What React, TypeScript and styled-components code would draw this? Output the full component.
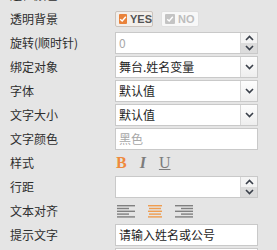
import React from "react";
import styled, { createGlobalStyle } from "styled-components";

const GlobalStyle = createGlobalStyle`
  html, body {
    margin: 0;
    padding: 0;
    background: #e5e5e5;
    overflow: hidden;
  }
  body {
    font-family: "Noto Sans CJK SC", "Noto Sans", sans-serif;
  }
`;

const Panel = styled.div`
  margin-top: -16px;
  width: 277px;
  display: flex;
  flex-direction: column;
  gap: 2px;
`;

const Row = styled.div`
  display: grid;
  grid-template-columns: 115px 143px;
  height: 22px;
  align-items: center;
`;

const Label = styled.div`
  padding-left: 10px;
  font-size: 12px;
  line-height: 22px;
  color: #2e2e2e;
  white-space: nowrap;
`;

const Field = styled.div`
  position: relative;
  height: 22px;
  box-sizing: border-box;
  border: 1px solid #c9c9c9;
  background: #fff;
  display: flex;
  align-items: center;
`;

const FieldText = styled.div<{ muted?: boolean }>`
  flex: 1;
  padding-left: 3px;
  font-size: 12px;
  line-height: 20px;
  color: ${(p) => (p.muted ? "#a8a8a8" : "#1e1e1e")};
  white-space: nowrap;
  overflow: hidden;
`;

const SideButton = styled.div`
  width: 16px;
  height: 20px;
  border-left: 1px solid #d6d6d6;
  background: linear-gradient(#fdfdfd, #eeeeee);
  display: flex;
  align-items: center;
  justify-content: center;
`;

const SpinBox = styled.div`
  width: 16px;
  height: 20px;
  border-left: 1px solid #d6d6d6;
  display: flex;
  flex-direction: column;
`;

const SpinHalf = styled.div<{ down?: boolean }>`
  flex: 1;
  display: flex;
  align-items: center;
  justify-content: center;
  background: ${(p) => (p.down ? "#dcdcdc" : "#f4f4f4")};
`;

const Toggles = styled.div`
  display: flex;
  gap: 8px;
  align-items: center;
`;

const Toggle = styled.div<{ active?: boolean }>`
  width: 38px;
  height: 16px;
  box-sizing: border-box;
  border: 1px solid ${(p) => (p.active ? "#cbc3bd" : "#e0e0e0")};
  border-radius: 2px;
  background: ${(p) => (p.active ? "#f3efeb" : "#f8f8f8")};
  display: flex;
  align-items: center;
  gap: 3px;
  padding-left: 3px;
  font-family: "Liberation Sans", Arial, sans-serif;
  font-size: 11px;
  font-weight: bold;
  color: ${(p) => (p.active ? "#555" : "#bdbdbd")};
`;

const CheckMark = styled.div<{ active?: boolean }>`
  width: 10px;
  height: 10px;
  border-radius: 1px;
  background: ${(p) => (p.active ? "#e9823a" : "#c4c4c4")};
  display: flex;
  align-items: center;
  justify-content: center;
`;

const StyleButtons = styled.div`
  display: flex;
  align-items: center;
  gap: 13px;
  padding-left: 1px;
  font-family: "Liberation Serif", "Times New Roman", serif;
  font-size: 16px;
  font-weight: bold;
  line-height: 22px;
`;

const StyleGlyph = styled.span<{ on?: boolean; italic?: boolean; under?: boolean }>`
  color: ${(p) => (p.on ? "#ef8a3e" : "#7c7c7c")};
  font-style: ${(p) => (p.italic ? "italic" : "normal")};
  font-weight: ${(p) => (p.under ? "normal" : "bold")};
  text-decoration: ${(p) => (p.under ? "underline" : "none")};
  text-underline-offset: 1px;
`;

const AlignGroup = styled.div`
  display: flex;
  align-items: center;
  gap: 11px;
  padding-left: 2px;
`;

const Chevron = ({ up }: { up?: boolean }) => (
  <svg width="9" height="6" viewBox="0 0 9 6">
    <path
      d={up ? "M1 5 L4.5 1.5 L8 5" : "M1 1 L4.5 4.5 L8 1"}
      fill="none"
      stroke="#3a404a"
      strokeWidth="1.6"
    />
  </svg>
);

const Tick = () => (
  <svg width="8" height="8" viewBox="0 0 8 8">
    <path d="M1.2 4.2 L3.2 6 L6.8 1.8" fill="none" stroke="#fff" strokeWidth="1.4" />
  </svg>
);

const AlignIcon = ({ mode, on }: { mode: "left" | "center" | "right"; on?: boolean }) => {
  const color = on ? "#f0953f" : "#6e6e6e";
  const widths = on ? [14, 12, 14, 12, 14] : [18, 12, 18, 12, 18];
  const full = 18;
  return (
    <svg width={full} height="14" viewBox={`0 0 ${full} 14`}>
      {widths.map((w, i) => {
        const x = mode === "left" ? 0 : mode === "right" ? full - w : (full - w) / 2;
        return (
          <rect key={i} x={x} y={1 + i * 2.8} width={w} height="1.4" fill={color} opacity={on ? 0.9 : 0.85} />
        );
      })}
    </svg>
  );
};

export default function App() {
  return (
    <>
      <GlobalStyle />
      <Panel>
        <Row>
          <Label>边框颜色</Label>
        </Row>
        <Row>
          <Label>透明背景</Label>
          <Toggles>
            <Toggle active>
              <CheckMark active>
                <Tick />
              </CheckMark>
              YES
            </Toggle>
            <Toggle>
              <CheckMark>
                <Tick />
              </CheckMark>
              NO
            </Toggle>
          </Toggles>
        </Row>
        <Row>
          <Label>旋转(顺时针)</Label>
          <Field>
            <FieldText muted>0</FieldText>
            <SpinBox>
              <SpinHalf>
                <Chevron up />
              </SpinHalf>
              <SpinHalf down>
                <Chevron />
              </SpinHalf>
            </SpinBox>
          </Field>
        </Row>
        <Row>
          <Label>绑定对象</Label>
          <Field>
            <FieldText>舞台.姓名变量</FieldText>
            <SideButton>
              <Chevron />
            </SideButton>
          </Field>
        </Row>
        <Row>
          <Label>字体</Label>
          <Field>
            <FieldText>默认值</FieldText>
            <SideButton>
              <Chevron />
            </SideButton>
          </Field>
        </Row>
        <Row>
          <Label>文字大小</Label>
          <Field>
            <FieldText>默认值</FieldText>
            <SideButton>
              <Chevron />
            </SideButton>
          </Field>
        </Row>
        <Row>
          <Label>文字颜色</Label>
          <Field>
            <FieldText muted>黑色</FieldText>
          </Field>
        </Row>
        <Row>
          <Label>样式</Label>
          <StyleButtons>
            <StyleGlyph on>B</StyleGlyph>
            <StyleGlyph italic>I</StyleGlyph>
            <StyleGlyph under>U</StyleGlyph>
          </StyleButtons>
        </Row>
        <Row>
          <Label>行距</Label>
          <Field>
            <FieldText />
            <SpinBox>
              <SpinHalf>
                <Chevron up />
              </SpinHalf>
              <SpinHalf down>
                <Chevron />
              </SpinHalf>
            </SpinBox>
          </Field>
        </Row>
        <Row>
          <Label>文本对齐</Label>
          <AlignGroup>
            <AlignIcon mode="left" />
            <AlignIcon mode="center" on />
            <AlignIcon mode="right" />
          </AlignGroup>
        </Row>
        <Row>
          <Label>提示文字</Label>
          <Field>
            <FieldText>请输入姓名或公号</FieldText>
          </Field>
        </Row>
        <Row>
          <Label />
          <Field>
            <FieldText />
          </Field>
        </Row>
      </Panel>
    </>
  );
}
